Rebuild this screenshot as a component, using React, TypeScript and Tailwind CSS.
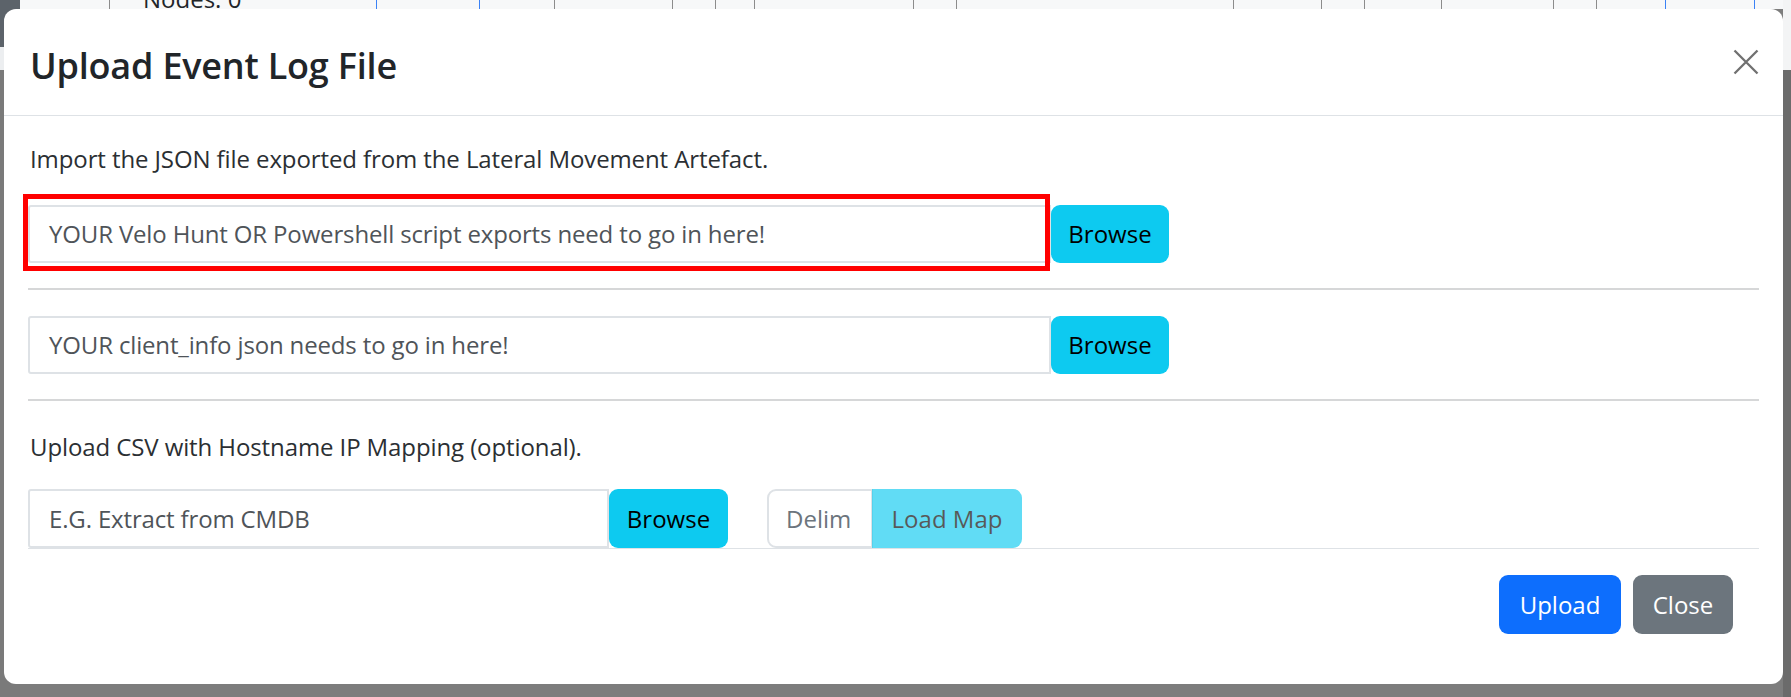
import React from "react";

function CloseIcon() {
  return (
    <svg width="26" height="26" viewBox="0 0 26 26" fill="none" aria-hidden="true">
      <path d="M1.5 1.5 L24.5 24.5 M24.5 1.5 L1.5 24.5" stroke="#707070" strokeWidth="2.3" />
    </svg>
  );
}

function TopStrip() {
  return (
    <div className="flex h-[9px] shrink-0 overflow-hidden bg-[#f7f8f9]">
      <div className="w-[89px] shrink-0" />
      <div className="w-[267px] shrink-0 border-l border-[#8c8c8c] pl-[33px]">
        <div className="-mt-[13px] text-[24px] leading-[24px] text-[#212529]">Nodes: 0</div>
      </div>
      <div className="w-[103px] shrink-0 border-l border-[#3b82f6]" />
      <div className="w-[75px] shrink-0 border-l border-[#3b82f6]" />
      <div className="w-[118px] shrink-0 border-l border-[#8c8c8c]" />
      <div className="w-[43px] shrink-0 border-l border-[#8c8c8c]" />
      <div className="w-[39px] shrink-0 border-l border-[#8c8c8c]" />
      <div className="w-[159px] shrink-0 border-l border-[#8c8c8c]" />
      <div className="w-[43px] shrink-0 border-l border-[#8c8c8c]" />
      <div className="w-[277px] shrink-0 border-l border-[#8c8c8c]" />
      <div className="w-[88px] shrink-0 border-l border-[#8c8c8c]" />
      <div className="w-[43px] shrink-0 border-l border-[#8c8c8c]" />
      <div className="w-[77px] shrink-0 border-l border-[#8c8c8c]" />
      <div className="w-[112px] shrink-0 border-l border-[#8c8c8c]" />
      <div className="w-[43px] shrink-0 border-l border-[#8c8c8c]" />
      <div className="w-[69px] shrink-0 border-l border-[#8c8c8c]" />
      <div className="w-[89px] shrink-0 border-l border-[#3b82f6]" />
      <div className="flex-1 border-l border-[#3b82f6]" />
    </div>
  );
}

export default function App() {
  return (
    <div className="relative h-[697px] w-[1791px] overflow-hidden bg-[#7d7d7d] font-['Open_Sans','Noto_Sans',sans-serif]">
      {/* page behind the backdrop */}
      <div className="flex h-full">
        <div className="flex w-[20px] shrink-0 flex-col">
          <div className="h-[47px] bg-[#5c636a]" />
          <div className="h-[23px] bg-[#eceef0]" />
          <div className="flex-1 bg-[#7a7a7a]" />
        </div>
        <div className="flex flex-1 flex-col">
          <TopStrip />
          <div className="flex-1 bg-[#7d7d7d]" />
        </div>
        <div className="flex w-[8px] shrink-0 flex-col">
          <div className="h-[70px] bg-[#f3f4f5]" />
          <div className="flex-1 bg-[#6b6b6b]" />
        </div>
      </div>

      {/* modal dialog */}
      <div className="absolute left-[4px] top-[9px] flex w-[1779px] flex-col rounded-[12px] bg-white">
        <div className="flex h-[107px] items-center justify-between border-b border-[#dee2e6] pl-[26px] pr-[24px]">
          <h5 className="pt-[8px] text-[36px] font-semibold leading-[1.2] tracking-[-0.2px] text-[#212529]">Upload Event Log File</h5>
          <button type="button" className="flex h-[26px] w-[26px] items-center justify-center">
            <CloseIcon />
          </button>
        </div>

        <div className="px-[24px] pt-[25px]">
          <p className="pl-[2px] text-[24px] leading-[36px] tracking-[-0.1px] text-[#2b2f33]">
            Import the JSON file exported from the Lateral Movement Artefact.
          </p>

          <div className="relative mt-[28px] flex h-[58px]">
            <div className="flex w-[1023px] items-center rounded-l-[3px] border-2 border-[#dee2e6] bg-white pl-[19px] text-[24px] leading-[36px] tracking-[-0.15px] text-[#4f5459]">
              YOUR Velo Hunt OR Powershell script exports need to go in here!
            </div>
            <button type="button" className="flex w-[118px] items-center justify-center rounded-[9px] bg-[#0dcaf0] text-[24px] leading-[36px] text-black">
              Browse
            </button>
            <div className="pointer-events-none absolute -left-[5px] -top-[11px] h-[77px] w-[1027px] border-[5px] border-[#ff0000]" />
          </div>

          <div className="mt-[25px] h-[2px] bg-[#d6d7d8]" />

          <div className="mt-[26px] flex h-[58px]">
            <div className="flex w-[1023px] items-center rounded-l-[3px] border-2 border-[#dee2e6] bg-white pl-[19px] text-[24px] leading-[36px] tracking-[-0.15px] text-[#4f5459]">
              YOUR client_info json needs to go in here!
            </div>
            <button type="button" className="flex w-[118px] items-center justify-center rounded-[9px] bg-[#0dcaf0] text-[24px] leading-[36px] text-black">
              Browse
            </button>
          </div>

          <div className="mt-[25px] h-[2px] bg-[#d6d7d8]" />

          <p className="mt-[28px] pl-[2px] text-[24px] leading-[36px] tracking-[-0.1px] text-[#2b2f33]">
            Upload CSV with Hostname IP Mapping (optional).
          </p>

          <div className="mt-[24px] flex h-[59px]">
            <div className="flex w-[581px] items-center rounded-l-[3px] border-2 border-[#dee2e6] bg-white pl-[19px] text-[24px] leading-[36px] tracking-[-0.15px] text-[#4f5459]">
              E.G. Extract from CMDB
            </div>
            <button type="button" className="flex w-[119px] items-center justify-center rounded-[9px] bg-[#0dcaf0] text-[24px] leading-[36px] text-black">
              Browse
            </button>
            <div className="ml-[39px] flex w-[106px] items-center rounded-l-[9px] border-2 border-[#dee2e6] bg-white pl-[17px] text-[24px] leading-[36px] text-[#6c757d]">
              Delim
            </div>
            <button type="button" className="-ml-[1px] flex w-[150px] items-center justify-center rounded-r-[9px] bg-[#0dcaf0] text-[24px] leading-[36px] text-black opacity-65">
              Load Map
            </button>
          </div>

          <div className="h-[1px] bg-[#dee2e6]" />
        </div>

        <div className="flex justify-end gap-[12px] pb-[50px] pr-[50px] pt-[26px]">
          <button type="button" className="flex h-[59px] w-[122px] items-center justify-center rounded-[9px] bg-[#0d6efd] text-[24px] leading-[36px] text-white">
            Upload
          </button>
          <button type="button" className="flex h-[59px] w-[100px] items-center justify-center rounded-[9px] bg-[#6c757d] text-[24px] leading-[36px] text-white">
            Close
          </button>
        </div>
      </div>
    </div>
  );
}
